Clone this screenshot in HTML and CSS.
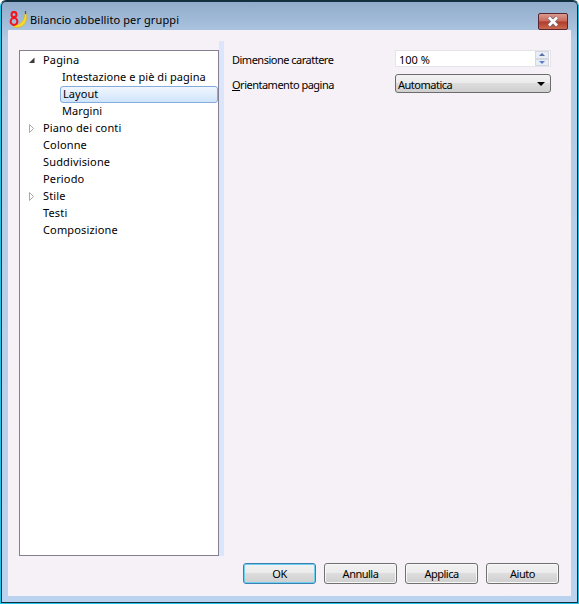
FILE: index.html
```html
<!DOCTYPE html>
<html lang="it">
<head>
    <meta charset="UTF-8">
    <title>Bilancio abbellito per gruppi</title>
    <link rel="stylesheet" href="styles.css">
</head>
<body>

    <div class="finestra">
        <div class="titolo">
            <svg class="logo" width="20" height="18" viewBox="0 0 20 18">
                <path d="M4 14c4.500 0.500 9-1.500 11-7l1-4.500 1.200 0c1.300 5 0 10-4 12.500-3 2-7.500 2-9.200 0.500z" fill="#f5d92e" stroke="#c9a820" stroke-width="0.500"/>
                <path d="M16.500 3l0-3" stroke="#5c5420" stroke-width="1.200"/>
                <circle cx="5" cy="3.400" r="2.500" fill="none" stroke="#f4121c" stroke-width="2"/>
                <circle cx="5" cy="10.500" r="3.400" fill="none" stroke="#f4121c" stroke-width="2"/>
            </svg>
            <span class="titolo-testo">Bilancio abbellito per gruppi</span>
            <div class="chiudi">
                <svg width="16" height="11" viewBox="0 0 16 11">
                    <path d="M4 1.500 L12 9.500 M12 1.500 L4 9.500" stroke="#6c6c78" stroke-width="4" fill="none"/>
                    <path d="M4 1.500 L12 9.500 M12 1.500 L4 9.500" stroke="#fff" stroke-width="2.600" fill="none"/>
                </svg>
            </div>
        </div>

        <div class="contenuto">
            <div class="principale">
                <div class="albero">
                    <div class="voce">
                        <svg class="freccia" width="8" height="9" viewBox="0 0 8 9"><path d="M6.500 1.500V7H1z" fill="#3a3a3a"/></svg>
                        Pagina
                    </div>
                    <div class="voce figlio">Intestazione e piè di pagina</div>
                    <div class="voce figlio selezionata">Layout</div>
                    <div class="voce figlio">Margini</div>
                    <div class="voce">
                        <svg class="freccia" width="8" height="9" viewBox="0 0 8 9"><path d="M1.500 0.500L5.500 4.500L1.500 8.500z" fill="#fff" stroke="#a8a8a8"/></svg>
                        Piano dei conti
                    </div>
                    <div class="voce">Colonne</div>
                    <div class="voce">Suddivisione</div>
                    <div class="voce">Periodo</div>
                    <div class="voce">
                        <svg class="freccia" width="8" height="9" viewBox="0 0 8 9"><path d="M1.500 0.500L5.500 4.500L1.500 8.500z" fill="#fff" stroke="#a8a8a8"/></svg>
                        Stile
                    </div>
                    <div class="voce">Testi</div>
                    <div class="voce">Composizione</div>
                </div>
                <div class="separatore"></div>
                <div class="pannello">
                    <div class="riga">
                        <label class="etichetta">Dimensione carattere</label>
                        <div class="spinner">
                            <span class="valore">100 %</span>
                            <div class="spin-frecce">
                                <div class="spin-btn"><i class="su"></i></div>
                                <div class="spin-btn"><i class="giu"></i></div>
                            </div>
                        </div>
                    </div>
                    <div class="riga">
                        <label class="etichetta"><u>O</u>rientamento pagina</label>
                        <div class="combo">
                            <span class="valore">Automatica</span>
                            <i class="combo-freccia"></i>
                        </div>
                    </div>
                </div>
            </div>

            <div class="bottoni">
                <button class="boton predefinito">OK</button>
                <button class="boton">Annulla</button>
                <button class="boton">Applica</button>
                <button class="boton">Aiuto</button>
            </div>
        </div>
    </div>

</body>
</html>
```

FILE: styles.css
```css
html, body {
    margin: 0;
    padding: 0;
    height: 100%;
}

body {
    font-family: "Noto Sans", "Liberation Sans", sans-serif;
    font-size: 11px;
    color: #000;
    background-color: #fff;
}

.finestra {
    height: 604px;
    box-sizing: border-box;
    display: flex;
    flex-direction: column;
    padding: 0 7px 7px 7px;
    background: linear-gradient(to bottom, #8fabc9 0, #b4cbe6 40px, #bcd3ef 100%);
    border: 1px solid #25c3e6;
    border-top-color: #10303f;
    border-radius: 6px 6px 0 0;
    box-shadow: inset 0 0 0 1px #14303f;
}

.titolo {
    height: 29px;
    display: flex;
    align-items: center;
    flex-shrink: 0;
    padding-top: 8px;
    box-sizing: border-box;
}

.logo {
    margin-left: 1px;
    margin-right: 1px;
}

.titolo-testo {
    letter-spacing: 0.1px;
}

.chiudi {
    margin-left: auto;
    margin-right: 3px;
    margin-top: 3px;
    width: 30px;
    height: 17px;
    box-sizing: border-box;
    border: 1px solid #5a2430;
    border-radius: 2px;
    background: linear-gradient(to bottom, #d99a8e 0, #c8695a 48%, #b03a28 52%, #c96a50 100%);
    display: flex;
    align-items: center;
    justify-content: center;
}

.contenuto {
    flex: 1;
    display: flex;
    flex-direction: column;
    background-color: #f5f1f6;
    min-height: 0;
}

.principale {
    flex: 1;
    display: flex;
    padding-top: 11px;
    padding-left: 11px;
    min-height: 0;
}

.albero {
    width: 200px;
    box-sizing: border-box;
    background-color: #fff;
    border: 1px solid #84808f;
    padding-top: 1px;
    margin-top: 9px;
    flex-shrink: 0;
}

.voce {
    height: 17px;
    line-height: 16px;
    padding-left: 23px;
    position: relative;
    white-space: nowrap;
    letter-spacing: 0.15px;
}

.voce.figlio {
    padding-left: 42px;
    letter-spacing: 0.05px;
}

.voce.selezionata {
    margin-left: 40px;
    padding-left: 2px;
    box-sizing: border-box;
    border: 1px solid #84acdd;
    border-radius: 3px;
    line-height: 14px;
    background: linear-gradient(to bottom, #f1f7fe, #cfe4fc);
}

.freccia {
    position: absolute;
    left: 8px;
    top: 4px;
}

.separatore {
    width: 5px;
    background-color: #dbe5fb;
    flex-shrink: 0;
}

.pannello {
    flex: 1;
    padding: 9px 20px 0 8px;
}

.riga {
    display: flex;
    align-items: center;
    justify-content: space-between;
    margin-bottom: 7px;
}

.etichetta {
    letter-spacing: -0.5px;
    padding-top: 2px;
}

.valore {
    padding-top: 2px;
}

.spinner {
    width: 156px;
    height: 17px;
    box-sizing: border-box;
    background-color: #fff;
    border: 1px solid #e4e4ea;
    display: flex;
    justify-content: space-between;
    align-items: center;
    padding: 0 1px 0 3px;
}

.spin-frecce {
    width: 14px;
    height: 15px;
    display: flex;
    flex-direction: column;
}

.spin-btn {
    flex: 1;
    border: 1px solid #d4d8e0;
    background-color: #e9edf4;
    display: flex;
    align-items: center;
    justify-content: center;
}

.su, .giu {
    width: 0;
    height: 0;
    border-left: 3px solid transparent;
    border-right: 3px solid transparent;
}

.su {
    border-bottom: 3px solid #5a6ea8;
}

.giu {
    border-top: 3px solid #5a82c8;
}

.combo {
    width: 156px;
    height: 19px;
    box-sizing: border-box;
    border: 1px solid #6c6c6c;
    border-radius: 3px;
    background: linear-gradient(to bottom, #f3f3f3 0, #ebebeb 45%, #dcdcdc 50%, #cfcfcf 100%);
    display: flex;
    justify-content: space-between;
    align-items: center;
    padding: 0 5px 0 2px;
    letter-spacing: -0.5px;
}

.combo-freccia {
    width: 0;
    height: 0;
    border-left: 4px solid transparent;
    border-right: 4px solid transparent;
    border-top: 4px solid #000;
}

.bottoni {
    display: flex;
    justify-content: flex-end;
    gap: 8px;
    padding: 0 12px 12px 0;
    margin-top: 7px;
}

.boton {
    width: 73px;
    height: 21px;
    padding: 0;
    font-family: inherit;
    font-size: 11px;
    letter-spacing: -0.5px;
    color: #000;
    border: 1px solid #707070;
    border-radius: 3px;
    background: linear-gradient(to bottom, #f2f2f2 0, #ebebeb 45%, #dddddd 50%, #cfcfcf 100%);
    box-shadow: inset 0 0 0 1px #f8f8f8;
}

.boton.predefinito {
    border-color: #3c7fb1;
    box-shadow: inset 0 0 0 1px #6fd0f0;
}
```
